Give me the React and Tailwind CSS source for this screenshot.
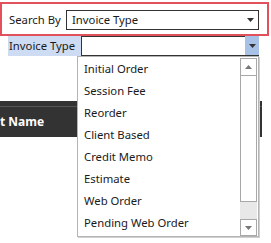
import React from "react";

const items = [
  "Initial Order",
  "Session Fee",
  "Reorder",
  "Client Based",
  "Credit Memo",
  "Estimate",
  "Web Order",
  "Pending Web Order",
];

function Arrow({ up = false, color = "#333" }) {
  return (
    <svg width="7" height="4" viewBox="0 0 7 4">
      {up ? (
        <polygon points="0,4 7,4 3.5,0" fill={color} />
      ) : (
        <polygon points="0,0 7,0 3.5,4" fill={color} />
      )}
    </svg>
  );
}

export default function App() {
  return (
    <div
      className="relative w-[271px] h-[243px] bg-white overflow-hidden text-[11.3px] text-[#1a1a1a]"
      style={{ fontFamily: '"Noto Sans", "Open Sans", sans-serif' }}
    >
      <div className="pt-[2px]">
        <div className="w-[269px] h-[34px] border-2 border-[#e2505c] flex items-center pl-[7px] pt-[2px]">
          <span className="w-[57px] leading-none">Search By</span>
          <div className="w-[193px] h-[20px] border border-[#333] flex items-center pl-[5px] pr-[4px] justify-between">
            <span className="leading-none">Invoice Type</span>
            <Arrow />
          </div>
        </div>
        <div className="flex h-[20px] pl-[8px]">
          <div className="w-[73px] h-[20px] bg-[#cddcf2] flex items-center pl-[1px]">
            <span className="leading-none">Invoice Type</span>
          </div>
          <div className="w-[178px] h-[20px] border border-[#333] border-r-0 bg-white flex">
            <div className="flex-1" />
            <div className="w-[14px] h-[19px] -mt-[1px] bg-[#a8c1e7] flex items-center justify-center">
              <Arrow />
            </div>
          </div>
        </div>
        <div className="mt-[45px] w-[262px] h-[36px] bg-[#333333] flex flex-col">
          <div className="h-[5px]" />
          <div className="h-[1px] bg-[#555]" />
          <div className="flex-1 flex items-center overflow-hidden">
            <span className="text-white font-bold text-[12px] whitespace-nowrap">t Name</span>
          </div>
        </div>
      </div>

      <div className="absolute left-[77px] top-[56px] w-[182px] h-[181px] bg-white border border-[#b4b4b4] shadow-[1px_1px_0_#d0d0d0] flex">
        <div className="flex-1 pt-[1px] pl-[6px]">
          {items.map((t) => (
            <div key={t} className="h-[22px] flex items-center whitespace-nowrap">
              {t}
            </div>
          ))}
        </div>
        <div className="w-[17px] mr-[1px] mt-[1px] flex flex-col">
          <div className="h-[18px] border border-[#a8a8a8] flex items-center justify-center bg-white">
            <Arrow up color="#777" />
          </div>
          <div className="h-[126px] border border-[#a8a8a8] border-t-0 bg-white" />
          <div className="h-[17px] bg-[#e8e8e8]" />
          <div className="h-[17px] border border-[#a8a8a8] flex items-center justify-center bg-white">
            <Arrow color="#777" />
          </div>
        </div>
      </div>
    </div>
  );
}
